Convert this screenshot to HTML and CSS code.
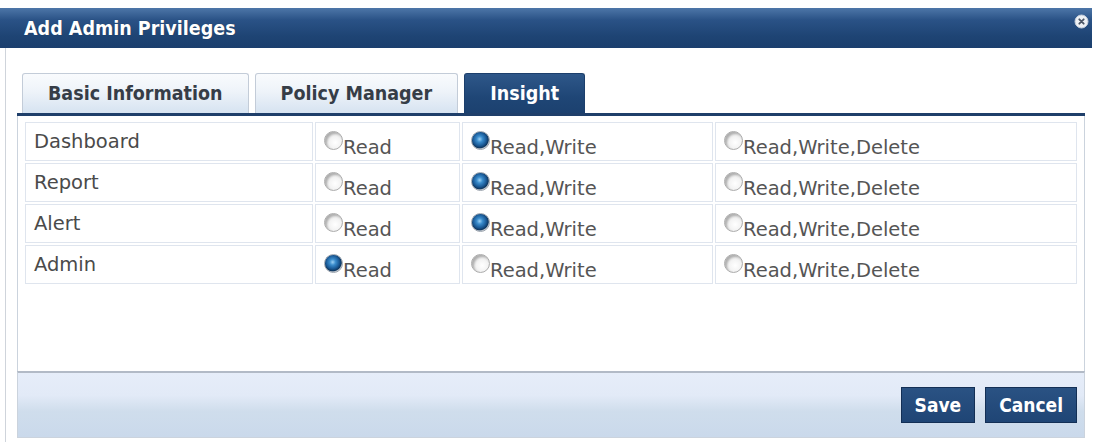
FILE: index.html
```html
<!DOCTYPE html>
<html lang="en">
<head>
  <meta charset="UTF-8" />
  <title>Add Admin Privileges</title>
  <link rel="stylesheet" href="styles.css">
</head>
<body>
  <div class="dialog">
    <div class="titlebar">
      <span class="title">Add Admin Privileges</span>
      <span class="close">
        <svg width="15" height="15" viewBox="0 0 15 15">
          <circle cx="7.5" cy="7.5" r="6.5" fill="#eef1f5" stroke="#c6cfdb" stroke-width="1"/>
          <path d="M5.3 5.3 L9.7 9.7 M9.7 5.3 L5.3 9.7" stroke="#4b5565" stroke-width="1.8" stroke-linecap="round"/>
        </svg>
      </span>
    </div>

    <div class="dialog-body">
      <div class="tabs">
        <div class="tab">Basic Information</div>
        <div class="tab">Policy Manager</div>
        <div class="tab active">Insight</div>
      </div>

      <div class="tab-panel">
        <table class="privs">
          <colgroup>
            <col class="c-name">
            <col class="c-read">
            <col class="c-write">
            <col>
          </colgroup>
          <tr>
            <td class="name">Dashboard</td>
            <td><label class="opt"><input type="radio" name="dashboard"><span>Read</span></label></td>
            <td><label class="opt"><input type="radio" name="dashboard" checked><span>Read,Write</span></label></td>
            <td><label class="opt"><input type="radio" name="dashboard"><span>Read,Write,Delete</span></label></td>
          </tr>
          <tr>
            <td class="name">Report</td>
            <td><label class="opt"><input type="radio" name="report"><span>Read</span></label></td>
            <td><label class="opt"><input type="radio" name="report" checked><span>Read,Write</span></label></td>
            <td><label class="opt"><input type="radio" name="report"><span>Read,Write,Delete</span></label></td>
          </tr>
          <tr>
            <td class="name">Alert</td>
            <td><label class="opt"><input type="radio" name="alert"><span>Read</span></label></td>
            <td><label class="opt"><input type="radio" name="alert" checked><span>Read,Write</span></label></td>
            <td><label class="opt"><input type="radio" name="alert"><span>Read,Write,Delete</span></label></td>
          </tr>
          <tr>
            <td class="name">Admin</td>
            <td><label class="opt"><input type="radio" name="admin" checked><span>Read</span></label></td>
            <td><label class="opt"><input type="radio" name="admin"><span>Read,Write</span></label></td>
            <td><label class="opt"><input type="radio" name="admin"><span>Read,Write,Delete</span></label></td>
          </tr>
        </table>
      </div>

      <div class="footer">
        <button class="btn">Save</button>
        <button class="btn">Cancel</button>
      </div>
    </div>
  </div>
</body>
</html>
```

FILE: styles.css
```css
* {
  margin: 0;
  padding: 0;
  box-sizing: border-box;
}

body {
  background: #fff;
  padding-top: 8px;
  font-family: "DejaVu Sans", Verdana, sans-serif;
  color: #4d4d4d;
}

.dialog {
  width: 1092px;
}

/* header bar */
.titlebar {
  height: 40px;
  display: flex;
  justify-content: space-between;
  align-items: center;
  padding: 0 3px 0 24px;
  background: linear-gradient(to bottom, #4d76a8 0%, #2a5286 30%, #1e4474 70%, #1b3f6e 100%);
}

.title {
  font-family: "DejaVu Sans Condensed", "DejaVu Sans", sans-serif;
  font-weight: bold;
  font-size: 19.5px;
  color: #fff;
  text-shadow: 0 0 1px rgba(0,0,0,0.4);
}

.close {
  align-self: flex-start;
  margin-top: 6px;
  display: flex;
}

.dialog-body {
  margin-left: 5px;
  border-left: 1px solid #cfd4db;
  padding: 25px 7px 4px 11px;
}

/* tabs */
.tabs {
  display: flex;
  gap: 6px;
  height: 43px;
  padding-left: 5px;
  border-bottom: 3px solid #1f3f6a;
}

.tab {
  height: 40px;
  padding: 0 25px;
  display: flex;
  align-items: center;
  border: 1px solid #c3ccd8;
  border-bottom: none;
  border-radius: 3px 3px 0 0;
  background: linear-gradient(to bottom, #f9fbfd 0%, #eef3f9 45%, #d6e3f1 100%);
  font-family: "DejaVu Sans Condensed", "DejaVu Sans", sans-serif;
  font-weight: bold;
  font-size: 19.5px;
  color: #363d47;
}

.tab.active {
  background: linear-gradient(to bottom, #2e5789 0%, #1f4676 60%, #1c416f 100%);
  border-color: #1c3f6c;
  color: #fff;
}

/* privileges table */
.tab-panel {
  height: 255px;
  border-left: 1px solid #cbd3dd;
  border-right: 1px solid #cbd3dd;
  padding: 4px 5px 0 5px;
}

.privs {
  width: 100%;
  table-layout: fixed;
  border-collapse: separate;
  border-spacing: 2px;
}

.c-name { width: 288px; }
.c-read { width: 145px; }
.c-write { width: 251px; }

.privs td {
  height: 39px;
  padding: 0 8px;
  border: 1px solid #dfe5ee;
  font-size: 19.5px;
  white-space: nowrap;
}

.privs td.name {
  color: #4a4a4a;
}

.opt {
  display: flex;
  align-items: flex-start;
  height: 37px;
  padding-top: 9px;
  color: #555;
}

.opt span {
  margin-top: 4px;
  line-height: 23px;
}

.opt input {
  appearance: none;
  -webkit-appearance: none;
  width: 19px;
  height: 19px;
  margin-top: -1px;
  border-radius: 50%;
  flex: none;
  border: 1px solid #acacac;
  background: radial-gradient(circle at 60% 62%, #ffffff 0%, #f3f3f3 40%, #d6d6d6 75%, #bdbdbd 100%);
  box-shadow: inset 2px 2px 2px rgba(0,0,0,0.2);
}

.opt input:checked {
  border-color: #9aa3ad;
  box-shadow: none;
  background: radial-gradient(circle at 45% 42%, #9bd0f4 0%, #3a8ccc 22%, #1a5a97 48%, #0f3760 64%, #cfd3d8 72%, #bcc0c5 100%);
}

/* bottom button bar */
.footer {
  height: 67px;
  display: flex;
  justify-content: flex-end;
  gap: 10px;
  padding: 14px 7px 0 0;
  border: 1px solid #cbd3dd;
  border-top: 2px solid #b2bac6;
  background: linear-gradient(to bottom, #e6edf9 0%, #e2eaf7 35%, #cfddec 60%, #cad9eb 100%);
}

.btn {
  height: 36px;
  padding: 0 13px;
  border: 1px solid #132f55;
  background: linear-gradient(to bottom, #2a5283 0%, #1f4575 100%);
  color: #fff;
  font-family: "DejaVu Sans Condensed", "DejaVu Sans", sans-serif;
  font-weight: bold;
  font-size: 19px;
  cursor: pointer;
}
```
